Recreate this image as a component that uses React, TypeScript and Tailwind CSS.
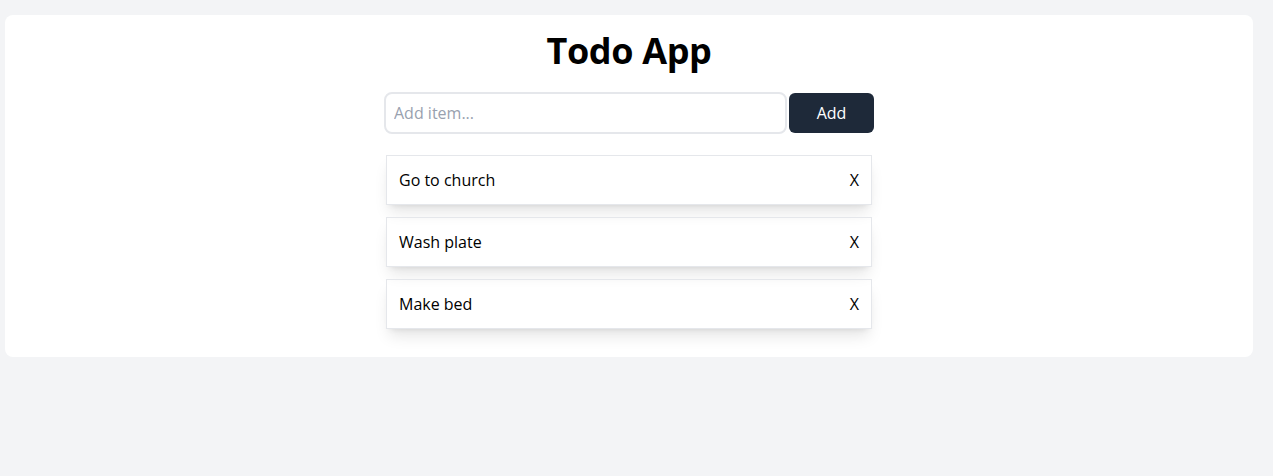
import React, { useState } from 'react';

type Todo = { id: number; text: string };

export default function App() {
  const [todos, setTodos] = useState<Todo[]>([
    { id: 1, text: 'Go to church' },
    { id: 2, text: 'Wash plate' },
    { id: 3, text: 'Make bed' },
  ]);
  const [value, setValue] = useState('');

  const addTodo = (e: React.FormEvent<HTMLFormElement>) => {
    e.preventDefault();
    if (!value.trim()) return;
    setTodos([...todos, { id: Date.now(), text: value.trim() }]);
    setValue('');
  };

  return (
    <div className="min-h-screen bg-gray-100 pt-[15px] pl-[5px] font-['Open_Sans',sans-serif]">
      <div className="w-[1248px] bg-white rounded-lg p-4">
        <h1 className="text-4xl font-bold text-center text-black mb-[21px] tracking-[-0.01em]">Todo App</h1>

        <form onSubmit={addTodo} className="w-[490px] mx-auto flex items-center gap-[2px]">
          <input
            value={value}
            onChange={e => setValue(e.target.value)}
            placeholder="Add item..."
            className="flex-1 h-[42px] border-2 border-gray-200 rounded-lg px-2 text-base text-black placeholder:text-gray-400 outline-none"
          />
          <button type="submit" className="w-[85px] h-10 bg-gray-800 text-white rounded-md text-base">
            Add
          </button>
        </form>

        <ul className="w-[486px] mx-auto mt-[21px]">
          {todos.map(todo => (
            <li
              key={todo.id}
              className="flex items-center justify-between border border-gray-200 shadow-lg px-3 py-3 mb-3 text-base text-black"
            >
              <span>{todo.text}</span>
              <button onClick={() => setTodos(todos.filter(t => t.id !== todo.id))}>X</button>
            </li>
          ))}
        </ul>
      </div>
    </div>
  );
}
